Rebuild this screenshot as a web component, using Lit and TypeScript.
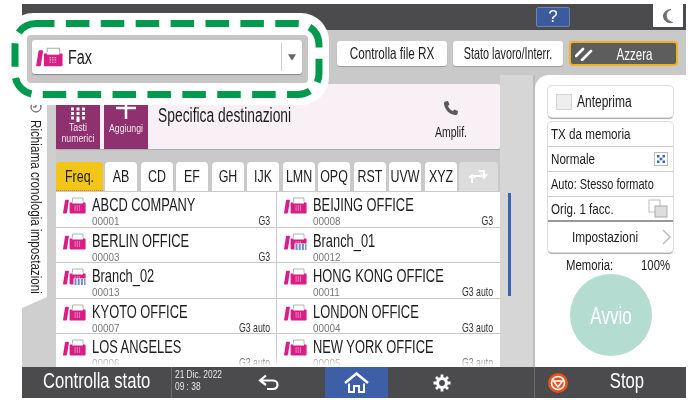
import { LitElement, html, css, svg } from "lit";
import { customElement } from "lit/decorators.js";

const t = (s: string) => html`<span class="w"><span class="c">${s}</span></span>`;

const faxIcon = (branch: boolean, big = false) => html`<svg class="fax ${big ? "big" : ""}" viewBox="0 0 24 17">
  <path d="M1 16 L3 3.500 Q3.200 2.800 4 2.800 L6.400 2.800 Q7 2.800 6.900 3.500 L5 15.500 Q4.800 16.400 4 16.400 L1.600 16.400 Q.9 16.400 1 16Z" fill="#d81e85"/>
  <path d="M10.500 6 V1 H21 V6" fill="#fff" stroke="#aaa" stroke-width=".9"/>
  <rect x="7.600" y="5.600" width="16" height="10.800" rx=".8" fill="#d81e85"/>
  <rect x="10.400" y="4.300" width="10.500" height="2.200" fill="#fff"/>
  <path d="M12.500 9h6M12.500 11h6M12.500 13h6" stroke="#f7c0dd" stroke-width="1" stroke-dasharray="1.200 1"/>
  ${branch
    ? svg`<rect x="11.500" y="10.500" width="12.500" height="6.500" fill="#fff"/><path d="M12.500 12h11M12.500 14h11M12.500 16h11" stroke="#3a67b8" stroke-width="1.500" stroke-dasharray="2 1.200"/>`
    : ""}
</svg>`;

interface Dest { name: string; num: string; mode: string; branch?: boolean }
const dests: Dest[] = [
  { name: "ABCD COMPANY", num: "00001", mode: "G3" },
  { name: "BEIJING OFFICE", num: "00008", mode: "G3" },
  { name: "BERLIN OFFICE", num: "00003", mode: "G3" },
  { name: "Branch_01", num: "00012", mode: "", branch: true },
  { name: "Branch_02", num: "00013", mode: "", branch: true },
  { name: "HONG KONG OFFICE", num: "00011", mode: "G3 auto" },
  { name: "KYOTO OFFICE", num: "00007", mode: "G3 auto" },
  { name: "LONDON OFFICE", num: "00004", mode: "G3 auto" },
  { name: "LOS ANGELES", num: "00006", mode: "G3 auto" },
  { name: "NEW YORK OFFICE", num: "00005", mode: "G3 auto" },
];
const tabs = ["AB", "CD", "EF", "GH", "IJK", "LMN", "OPQ", "RST", "UVW", "XYZ"];

@customElement("app-root")
export class AppRoot extends LitElement {
  static styles = css`
    :host { display: block; width: 691px; height: 400px; background: #fff; position: relative; overflow: hidden;
      font-family: "Liberation Sans", sans-serif; color: #1c1c1c; filter: blur(.35px); --s: .76; }
    .w { display: block; flex: 1; min-width: 0; }
    .c { display: block; width: calc(100% / var(--s)); transform: scaleX(var(--s)); transform-origin: 0 0; white-space: nowrap; }
    .screen { margin: 4px 0 0 22px; width: 664px; height: 394px; display: flex; flex-direction: column; }
    .top { height: 26px; flex: none; background: #4b4b4d; display: flex; justify-content: flex-end; padding-right: 3px; }
    .help { width: 34px; height: 20px; margin: 3px 83px 0 0; box-sizing: border-box; background: #3c5b9d; border: 1px solid #6f84b4; border-radius: 2px;
      color: #fff; font-size: 17px; line-height: 18px; text-align: center; }
    .moon { width: 30px; height: 23px; background: #fff; display: flex; align-items: center; justify-content: center; }
    .mid { flex: 1; min-height: 0; background: #c9c9c9; display: flex; flex-direction: column; }
    .head { height: 45px; flex: none; box-sizing: border-box; padding: 11px 8px 0 0; display: flex; justify-content: flex-end; gap: 6px; }
    .hbtn { height: 25px; width: 110px; box-sizing: border-box; background: #fff; border-radius: 3px; box-shadow: 0 1px 1px #999;
      font-size: 16.500px; line-height: 25px; text-align: center; --s: .71; }
    .hbtn.sm { --s: .655; }
    .azz { width: 109px; background: #5d5d5d; border: 2px solid #edb31c; color: #fff; display: flex; align-items: center; padding-left: 4px; line-height: 20px; box-shadow: none; border-radius: 4px; --s: .7; }
    .body { flex: 1; min-height: 0; display: flex; }
    .tabcol { width: 34px; flex: none; background: #cfcfcf; }
    .vtab { width: 25px; height: 233px; background: #fff; clip-path: polygon(0 0, 100% 0, 100% 222px, 0 233px); writing-mode: vertical-rl; font-size: 14.500px;
      box-sizing: border-box; padding: 26px 0 0 3px; display: flex; align-items: center; gap: 7px; white-space: nowrap; }
    .vt { display: block; height: 173px; }
    .vt span { display: block; height: 220px; transform: scaleY(.805); transform-origin: 0 0; }
    .dest { width: 444px; flex: none; padding-top: 9px; display: flex; flex-direction: column; min-height: 0; }
    .pink { height: 65px; flex: none; background: #f9f0f6; border-radius: 2px; display: flex; gap: 4px; box-shadow: 0 1px 1px #aaa; }
    .pbtn { width: 44px; flex: none; background: #8f306f; color: #f3e5ee; font-size: 11.500px; line-height: 10.500px; text-align: center; display: flex; flex-direction: column; align-items: stretch; justify-content: flex-end; padding-bottom: 6px; box-sizing: border-box; --s: .76; }
    .pbtn svg { align-self: center; }
    .pbtn .w { flex: none; }
    .pbtn .g { margin: 4px 0 10px; }
    .spec { flex: 1; font-size: 19.500px; padding: 20px 0 0 6px; --s: .71; }
    .amp { width: 66px; flex: none; font-size: 14px; display: flex; flex-direction: column; align-items: stretch; padding: 16px 0 0; margin-right: 16px; gap: 8px; text-align: center; --s: .75; }
    .amp svg { align-self: center; }
    .amp .w { flex: none; }
    .tabs { flex: none; height: 29px; margin: 13px 0 1px; display: flex; gap: 3.500px; }
    .tab { width: 32px; background: #fff; border-radius: 4px 4px 0 0; font-size: 17px; line-height: 30px; text-align: center; --s: .73; }
    .tab.freq { width: 47px; background: #f2c519; border-bottom: 1px dotted #d9822b; margin-right: -1.500px; box-sizing: border-box; }
    .tab.sw { width: 39px; margin-left: -1.500px; background: #dcdcdc; display: flex; align-items: center; justify-content: center; }
    .list { flex: 1; min-height: 0; overflow: hidden; background: #fff; display: grid; grid-template-columns: 221px 223px; grid-auto-rows: 35.600px; position: relative; }
    .list::after { content: ""; position: absolute; left: 0; right: 0; bottom: 0; height: 12px; background: linear-gradient(transparent, #fff); }
    .row { border-bottom: 1px solid #c8c8c8; box-sizing: border-box; display: grid; grid-template-columns: 24px 1fr auto; grid-template-rows: 20px 12px; column-gap: 6px; padding: 0 7px 0 6px; --s: .695; }
    .row:nth-child(odd) { border-right: 1px solid #c8c8c8; padding-right: 6px; }
    .fax { width: 24px; height: 17px; margin-top: 5px; display: block; flex: none; }
    .fax.big { width: 28px; height: 20px; margin: 0; }
    .name { font-size: 18.500px; line-height: 20px; grid-column: 2 / 4; margin-top: 3px; }
    .num { font-size: 11.500px; line-height: 12px; color: #777; grid-column: 2; margin-top: 3px; --s: .86; }
    .mode { font-size: 12.500px; line-height: 12px; color: #333; grid-column: 3; margin-top: 3px; width: 40px; text-align: right; --s: .7; }
    .mode .c { transform-origin: 100% 0; margin-left: calc(100% - 100% / var(--s)); }
    .scroll { width: 35px; flex: none; background: #d6d6d6; box-sizing: border-box; padding: 118px 0 0 8px; border-right: 2px solid #bdbdbd; }
    .bar { width: 3px; height: 103px; background: #3d62b2; }
    .side { width: 151px; flex: none; background: #fff; border-top-left-radius: 14px; box-sizing: border-box; padding: 11px 13px 0 13px; display: flex; flex-direction: column; align-items: stretch; --s: .75; }
    .card { border-radius: 4px; box-shadow: 0 0 0 1px #ddd, 0 1.500px 1px #aaa; background: #fff; }
    .prev { height: 31px; display: flex; align-items: center; gap: 5px; padding-left: 8px; font-size: 16px; flex: none; }
    .chk { width: 14px; height: 14px; background: #eee; border: 1px solid #d4d4d4; flex: none; }
    .grp { margin-top: 5px; flex: none; }
    .opt { height: 25px; box-sizing: border-box; border-bottom: 1px solid #ccc; font-size: 15.500px; line-height: 24px; padding: 0 5px 0 3px; display: flex; justify-content: space-between; align-items: center; --s: .75; }
    .opt.long { --s: .71; }
    .opt.last { border-bottom: 2px solid #999; }
    .imp { height: 30px; font-size: 15.500px; display: flex; align-items: center; padding-right: 2px; text-align: center; --s: .76; }
    .mem { display: flex; justify-content: space-between; padding: 4px 3px 0 18px; font-size: 15.500px; line-height: 18px; --s: .73; }
    .mem .r { width: 35px; flex: none; text-align: right; }
    .go { width: 82px; height: 82px; flex: none; border-radius: 50%; background: #b4dcd0; color: #fff; font-size: 23px; line-height: 85px; text-align: center; margin: 0 0 0 22px; --s: .74; }
    .bot { height: 31px; flex: none; background: #4b4b4d; color: #fff; display: flex; align-items: center; }
    .chk-st { width: 150px; flex: none; box-sizing: border-box; padding-left: 21px; font-size: 22.500px; line-height: 27px; border-right: 1px solid #6b6b6b; height: 100%; --s: .74; }
    .date { width: 60px; flex: none; font-size: 11px; line-height: 12px; padding: 1px 0 0 3px; box-sizing: border-box; height: 100%; color: #e8e8e8; --s: .76; }
    .ico { width: 93px; flex: none; display: flex; justify-content: center; align-items: center; height: 100%; box-sizing: border-box; padding-right: 20px; }
    .home { width: 63px; flex: none; background: #3c5fa8; height: 100%; display: flex; align-items: center; justify-content: center; }
    .gear { width: 147px; flex: none; display: flex; justify-content: center; border-right: 1px solid #6b6b6b; height: 100%; align-items: center; box-sizing: border-box; padding-right: 38px; }
    .stop { flex: 1; display: flex; align-items: center; padding-left: 13px; font-size: 22.500px; height: 100%; text-align: center; --s: .74; }
    .stop .w { margin-top: -4px; }
    .call { position: absolute; left: 5px; top: 13px; width: 324px; height: 92px; background: #fff; border-radius: 28px; box-sizing: border-box; padding: 22px 21px 0 22px; }
    .dash { position: absolute; left: 0; top: 0; overflow: visible; }
    .sel { height: 48px; box-sizing: border-box; background: #c6c6c6; border-radius: 4px; padding: 5px 6px 9px 5px; }
    .sel > div { height: 100%; background: #fff; border-radius: 3px; box-shadow: 0 1px 1px #888; display: flex; align-items: center; padding-left: 3px; font-size: 20px; gap: 5px; --s: .72; }
    .arr { width: 20px; height: 28px; border-left: 1px solid #ccc; display: flex; align-items: center; justify-content: center; flex: none; }
  `;

  render() {
    return html`
      <div class="screen">
        <div class="top">
          <div class="help">?</div>
          <div class="moon"><svg width="14" height="16" viewBox="0 0 14 16"><path d="M10 1.500 C4 3 3 12 11.500 14.500 C6 15.500 2.500 12 2.500 8 C2.500 4.500 6 1.500 10 1.500Z" fill="#6e6e6e" stroke="#6e6e6e"/></svg></div>
        </div>
        <div class="mid">
          <div class="head">
            <div class="hbtn">${t("Controlla file RX")}</div>
            <div class="hbtn sm">${t("Stato lavoro/Interr.")}</div>
            <div class="hbtn azz">
              <svg width="18" height="14" viewBox="0 0 18 14"><path d="M1 9 L8 2 M7 13 L16 4" stroke="#fff" stroke-width="2.600" stroke-linecap="round"/></svg>
              ${t("Azzera")}
            </div>
          </div>
          <div class="body">
            <div class="tabcol">
              <div class="vtab">
                <svg width="12" height="12" viewBox="0 0 12 12"><circle cx="6" cy="6" r="5" fill="none" stroke="#444"/><path d="M6 3 V6 H3" fill="none" stroke="#444"/></svg>
                <div class="vt"><span>Richiama cronologia impostazioni</span></div>
              </div>
            </div>
            <div class="dest">
              <div class="pink">
                <div class="pbtn">
                  <svg width="16" height="15" viewBox="0 0 16 15"><path d="M1 2h14M1 6.500h14M1 11h14" stroke="#fff" stroke-width="3" stroke-dasharray="3 2.500"/><rect x="6.500" y="12" width="3" height="3" fill="#fff"/></svg>
                  ${t("Tasti")}${t("numerici")}
                </div>
                <div class="pbtn">
                  <svg width="20" height="18" viewBox="0 0 20 18"><path d="M10 0V18M0 7H20" stroke="#fff" stroke-width="2.500"/></svg>
                  <div class="g">${t("Aggiungi")}</div>
                </div>
                <div class="spec">${t("Specifica destinazioni")}</div>
                <div class="amp">
                  <svg width="16" height="16" viewBox="0 0 16 16"><path d="M2 1.500 L5 1 L6.500 4.500 L5 6 C6 8.500 7.500 10 10 11 L11.500 9.500 L15 11 L14.500 14 C14 15 13 15.200 12 15 C6 14 2 10 1 4 C1 3 1.200 2 2 1.500Z" fill="#5a5a5a"/></svg>
                  ${t("Amplif.")}
                </div>
              </div>
              <div class="tabs">
                <div class="tab freq">${t("Freq.")}</div>
                ${tabs.map((x) => html`<div class="tab">${t(x)}</div>`)}
                <div class="tab sw">
                  <svg width="20" height="14" viewBox="0 0 20 14"><path d="M4 13V6H13M11 1H16V8M13 4l3 4 3-4M1 8l3-3 3 3" fill="none" stroke="#fff" stroke-width="1.800"/></svg>
                </div>
              </div>
              <div class="list">
                ${dests.map((d) => html`<div class="row">
                  <div>${faxIcon(!!d.branch)}</div>
                  <div class="name">${t(d.name)}</div>
                  <div></div>
                  <div class="num">${t(d.num)}</div>
                  <div class="mode">${t(d.mode)}</div>
                </div>`)}
              </div>
            </div>
            <div class="scroll"><div class="bar"></div></div>
            <div class="side">
              <div class="card prev"><div class="chk"></div>${t("Anteprima")}</div>
              <div class="card grp">
                <div class="opt">${t("TX da memoria")}</div>
                <div class="opt">${t("Normale")}
                  <svg width="14" height="14" viewBox="0 0 14 14"><rect x=".5" y=".5" width="13" height="13" fill="#fff" stroke="#bbb"/><path d="M3 3h2.500v2.500H3zM8.500 3H11v2.500H8.500zM3 8.500h2.500V11H3zM8.500 8.500H11V11H8.500zM5.700 5.700h2.600v2.600H5.700z" fill="#3a67b8"/></svg>
                </div>
                <div class="opt long">${t("Auto: Stesso formato")}</div>
                <div class="opt last">${t("Orig. 1 facc.")}
                  <svg width="20" height="19" viewBox="0 0 20 19"><rect x="1" y="1" width="11" height="12" fill="#fff" stroke="#bbb"/><rect x="7" y="7" width="12" height="11" fill="#ddd" stroke="#aaa"/></svg>
                </div>
                <div class="imp">${t("Impostazioni")}
                  <svg width="9" height="16" viewBox="0 0 9 16"><path d="M1 1 L8 8 L1 15" fill="none" stroke="#bbb" stroke-width="1.500"/></svg>
                </div>
              </div>
              <div class="mem">${t("Memoria:")}<div class="r">${t("100%")}</div></div>
              <div class="go">${t("Avvio")}</div>
            </div>
          </div>
        </div>
        <div class="bot">
          <div class="chk-st">${t("Controlla stato")}</div>
          <div class="date">${t("21 Dic. 2022")}${t("09 : 38")}</div>
          <div class="ico"><svg width="22" height="17" viewBox="0 0 22 17"><path d="M8 1.500 L2 6.500 L8 11 M2.500 6.500 H15 C21 6.500 21 15 15 15 H9" fill="none" stroke="#fff" stroke-width="2.200"/></svg></div>
          <div class="home"><svg width="25" height="21" viewBox="0 0 25 21"><path d="M1 11 L12.500 1.500 L24 11" fill="none" stroke="#fff" stroke-width="2.500"/><path d="M5 11.500V20H10V14H15V20H20V11.500" fill="none" stroke="#fff" stroke-width="2"/></svg></div>
          <div class="gear"><svg width="18" height="18" viewBox="0 0 18 18"><circle cx="9" cy="9" r="4.500" fill="none" stroke="#fff" stroke-width="3.200"/><path d="M9 .5v3.500M9 14v3.500M.5 9H4M14 9h3.500M3 3l2.500 2.500M12.500 12.500L15 15M15 3l-2.500 2.500M5.500 12.500L3 15" stroke="#fff" stroke-width="2.800"/></svg></div>
          <div class="stop">
            <svg width="20" height="20" viewBox="0 0 20 20"><circle cx="10" cy="10" r="10" fill="#e8501e"/><circle cx="10" cy="10" r="6.500" fill="none" stroke="#fff" stroke-width="1.600"/><path d="M5.500 8h9L10 14z" fill="none" stroke="#fff" stroke-width="1.500"/></svg>
            ${t("Stop")}
          </div>
        </div>
      </div>
      <div class="call">
        <svg class="dash" width="324" height="92" viewBox="0 0 324 92">
          <rect x="10" y="10.500" width="304" height="71" rx="21" fill="none" stroke="#009a4e" stroke-width="7" stroke-dasharray="23.500 11.400" stroke-dashoffset="5"/>
        </svg>
        <div class="sel"><div>
          ${faxIcon(false, true)}
          ${t("Fax")}
          <div class="arr"><svg width="8" height="7" viewBox="0 0 10 8"><path d="M0 0H10L5 8Z" fill="#666"/></svg></div>
        </div></div>
      </div>
    `;
  }
}
